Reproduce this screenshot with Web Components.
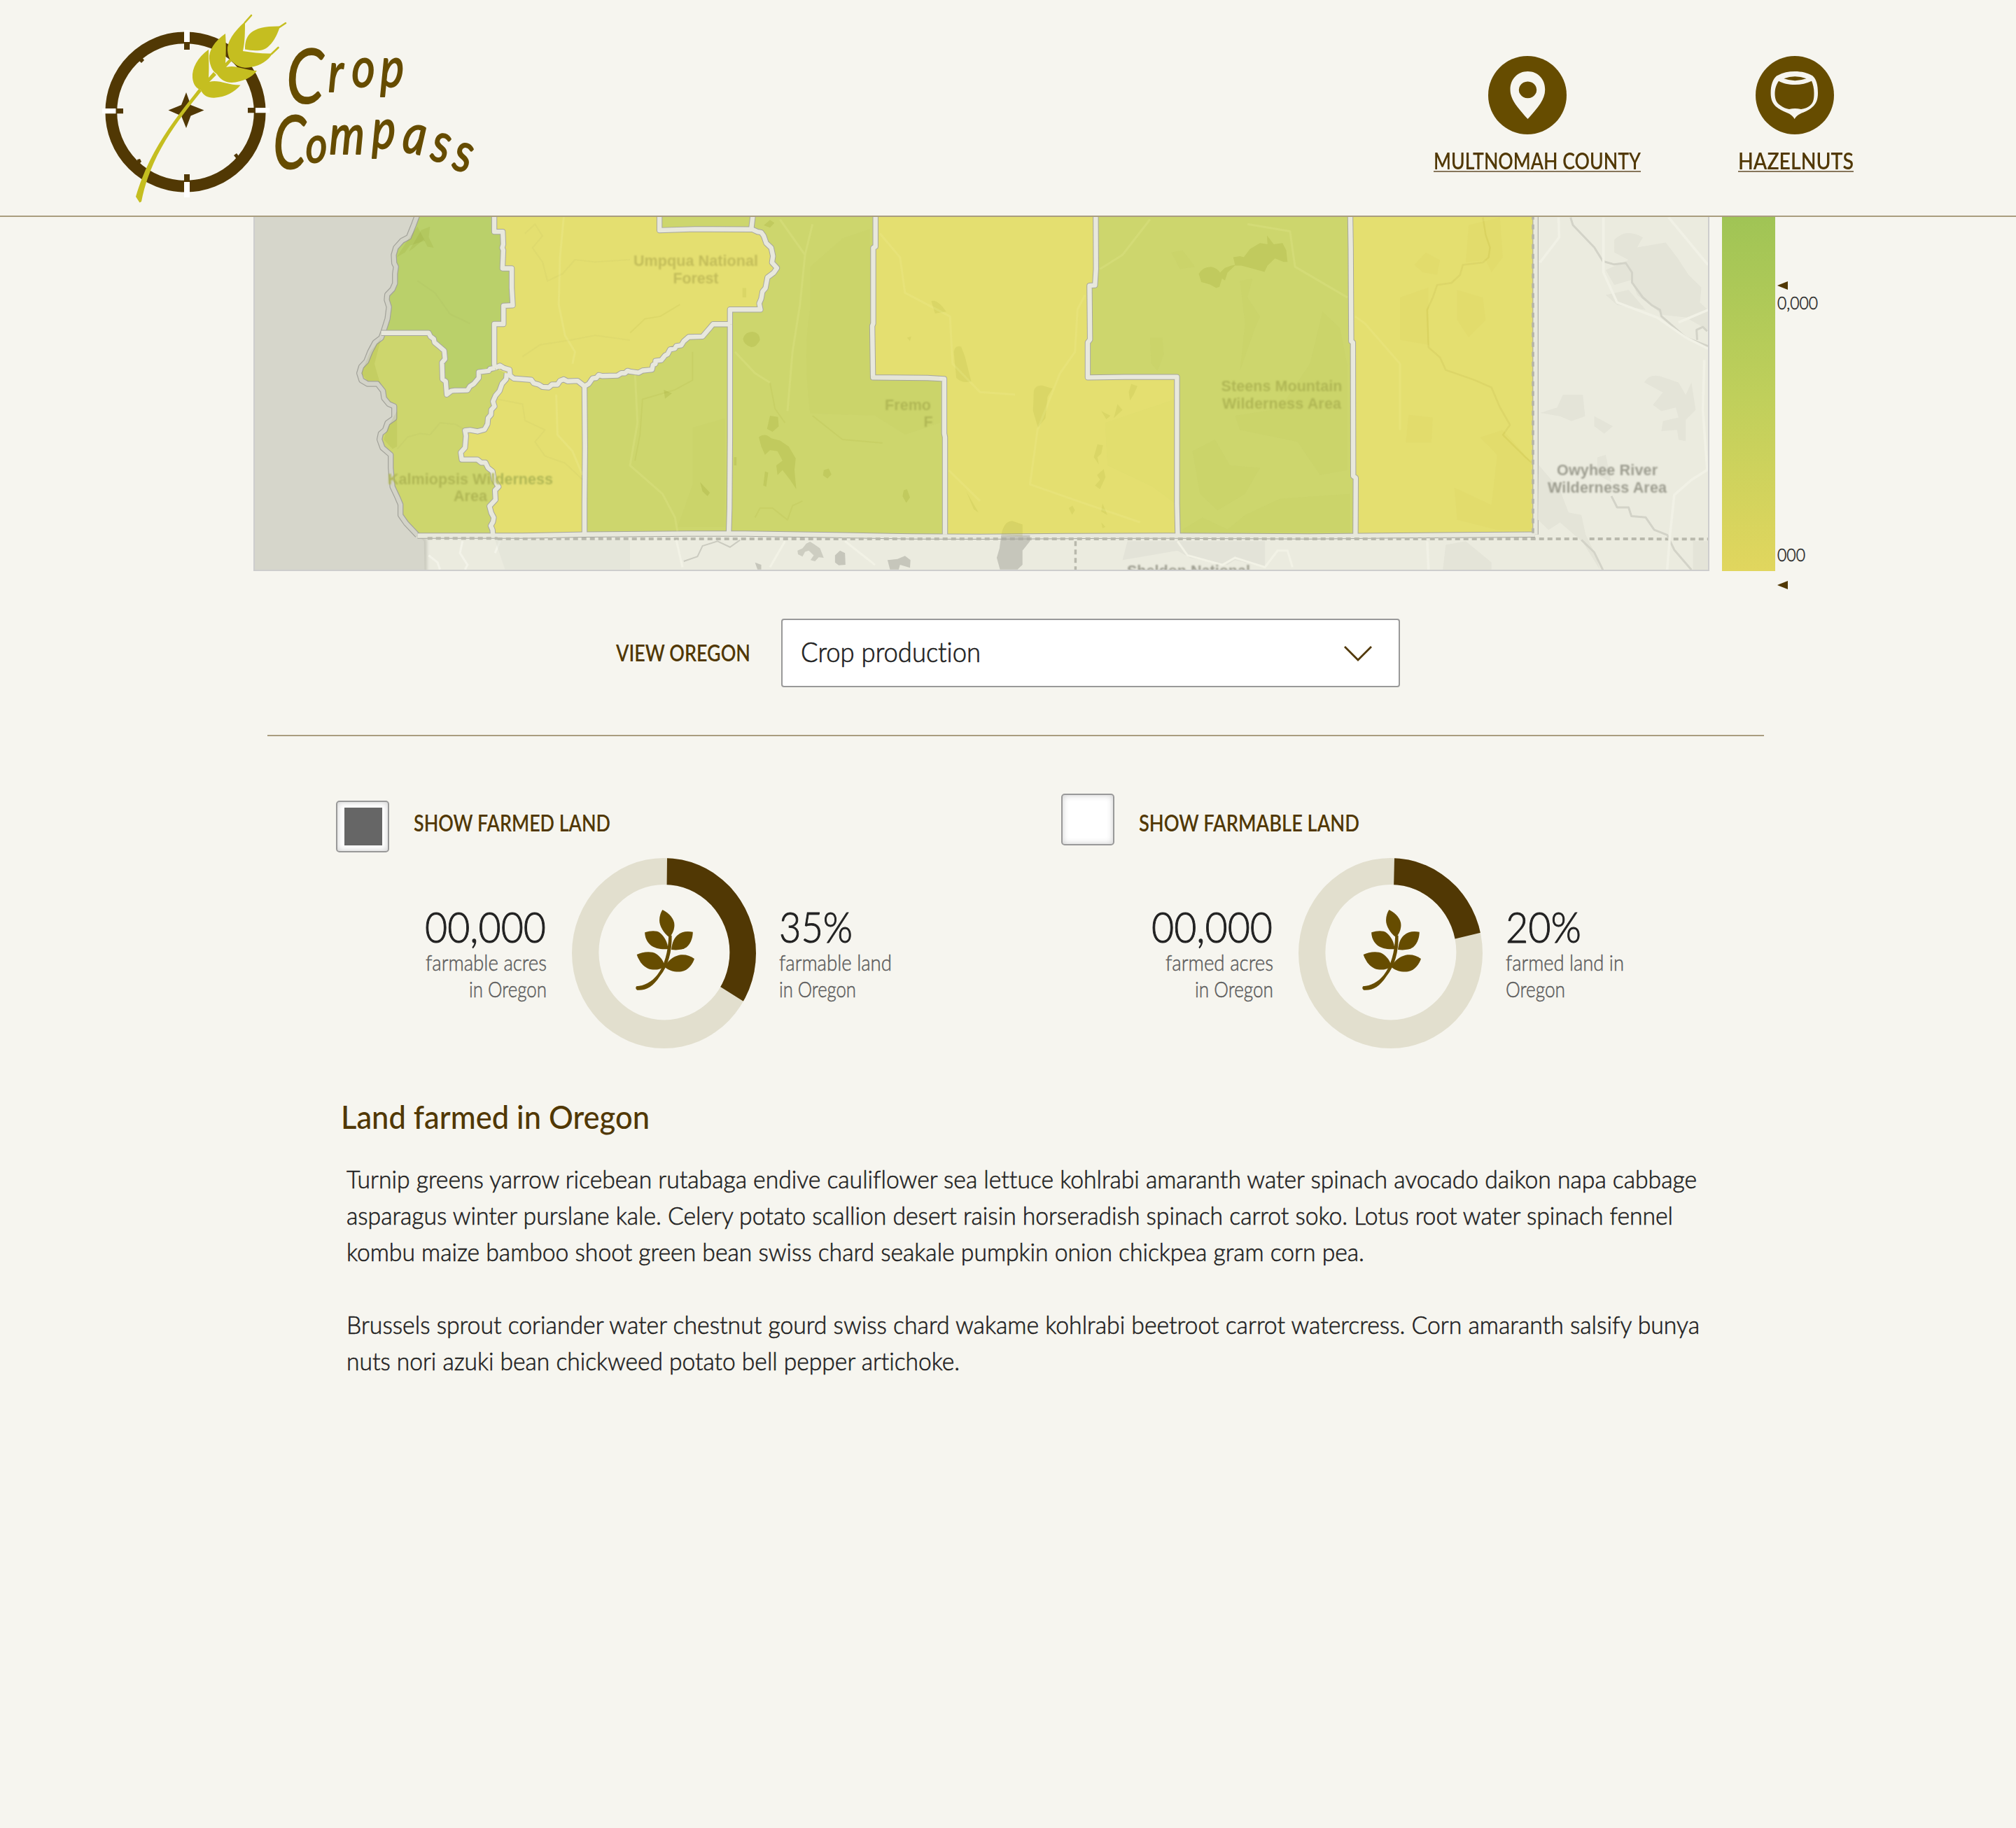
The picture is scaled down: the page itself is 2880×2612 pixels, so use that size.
<!DOCTYPE html>
<html lang="en">
<head>
<meta charset="utf-8">
<title>Crop Compass</title>
<style>
html,body{margin:0;padding:0;background:#f6f5ef}
body{font-family:Lato,"Open Sans",sans-serif;color:#222;width:2880px;min-height:2612px;overflow-x:hidden;font-variant-ligatures:none}
</style>
</head>
<body>
<crop-app></crop-app>
<script>
const define = (name, html, setup) => customElements.define(name, class extends HTMLElement {
  connectedCallback() {
    if (this.shadowRoot) return;
    const root = this.attachShadow({ mode: 'open' });
    root.innerHTML = typeof html === 'function' ? html(this) : html;
    if (setup) setup(this, root);
  }
});

/* One line of text, condensed or widened to the width in its "w" attribute.
   The 2px shift makes up for the side bearing of the first glyph. */
define('fit-text', el => `
<style>
:host{display:block;flex:none;width:${el.getAttribute('w')}px;white-space:nowrap;text-align:left}
span{display:inline-block;transform-origin:0 50%}
:host([underlined]) span{text-decoration:underline;text-decoration-thickness:2px;text-underline-offset:1.5px;text-decoration-skip-ink:none;text-decoration-color:#86755a}
</style><span><slot></slot></span>`, (el, root) => {
  const s = root.querySelector('span');
  const under = el.hasAttribute('underlined');
  const w = +el.getAttribute('w') + (under ? 0 : 3);
  s.style.transform = `translateX(${under ? 0 : -2}px) scaleX(${w / s.getBoundingClientRect().width})`;
});

define('crop-logo', `
<style>:host{display:block;width:600px;height:300px}svg{display:block}text{font-family:"Lato","Liberation Sans",sans-serif;font-style:italic;font-weight:400;fill:#664c00;stroke:#664c00;stroke-width:2;stroke-linejoin:round}</style>
<svg width="600" height="300" viewBox="120 0 600 300">
  <circle cx="265" cy="160" r="106.2" fill="none" stroke="#513804" stroke-width="16.8"/>
  <g fill="#fff"><path d="M263 43h8v17h-8zM263 260h8v22h-8zM146 155h19.500v7.300H146zM365 154h20v7.200h-20z"/></g>
  <g fill="#513804"><path d="M263 60h8v11h-8zM263 249h8v10h-8zM166 155h10v7.300h-10zM354 154h10v7.200h-10z"/>
  <path d="M266 132l6.500 18 19 7.500-19 8-6.500 17.500-7-17.500-18.500-8 18.500-7.500z"/>
  <path d="M198 86l5-4 3 4-4 4zM196 228l4-1 2 4-5 5zM334 222l4-3 3 4-3 4z"/></g>
  <g fill="#c5be20">
  <path d="M350 70.500C350 50 358 37 400 37.500C394 58 382 72 371 72Q360 73 350 70.500Z"/>
  <path d="M350 31C334 45 324 60 325 72C326 84 330 87 334 90C340 96 350 98 358 96C372 94 384 86 389 76.500C375 77 360 75 347 73C350 60 350 45 350 31Z"/>
  <path d="M322 48C306 59 298 73 299 84C300 95 304 102 310 106C315 114 322 118 331 118C346 117 360 111 367 101C350 101 338 92 323 96L331 87L328 84L322 90C323 76 323 62 322 48Z"/>
  <path d="M298 70.700C282 82 274 98 275 111C276 122 281 126 287 129C291 137 297 140 306 139.700C322 139 336 131 343.500 121.500C326 122 312 113 299 117L309 107L305 103L298 111C299 96 298 84 298 70.700Z"/>
  <path d="M284 127C251 169 213 215 194 281L199.500 289.500L202 288C215 221 254 172 288 130Z"/></g>
  <path d="M350 32L359 22M399 39L408 33M388 77L397.500 68" stroke="#c5be20" stroke-width="2.600" stroke-linecap="round"/>
  <g transform="scale(.8 1)">
  <text font-size="80"><tspan x="512" y="147" font-size="106" textLength="66" lengthAdjust="spacingAndGlyphs">C</tspan><tspan x="586" y="131">r</tspan><tspan x="628" y="124">o</tspan><tspan x="679" y="124">p</tspan></text>
  <text font-size="80"><tspan x="488" y="241" font-size="104" textLength="58" lengthAdjust="spacingAndGlyphs">C</tspan><tspan x="546" y="232" font-size="74">o</tspan><tspan x="588" y="220">m</tspan><tspan x="664" y="212">p</tspan><tspan x="717" y="216" rotate="9">a</tspan><tspan x="767" y="227" rotate="14">s</tspan><tspan x="806" y="240" rotate="16">s</tspan></text>
  </g>
</svg>`);

const ICONS = {
  pin: `<path fill="#f6f5ef" fill-rule="evenodd" d="M56.500 22c14.500 0 24.700 11 24.700 26 0 14-9.500 25-24.700 42C41.500 73 31.500 62 31.500 48c0-15 10.500-26 25-26zM56.500 36.500a12.700 11.900 0 1 0 .01 0z"/>`,
  nut: `<path fill="#f6f5ef" fill-rule="evenodd" d="M30.300 28.300C38 24 46 22 56 22S74 24 81.300 28.300C87 33 89 42 89 53C89 63 86 69 81 73C76 78 69 80 64 82.500C60 84 57.500 87 55.600 90C54 87 51 84 48 82.500C42 80 36 78 30 73C25 69 21.600 63 21.600 53C21.600 42 24.500 33 30.300 28.300ZM33 35.700C29 42 27.500 47 27.500 55C28 64 31 68 36 71Q41 75 48 76Q56 74 65 76Q73 75 77.600 71C82 67 83.500 63 83.500 53C83.500 46 82 40 80 35.700C73 39 65 41 56 41S39 39 33 35.700ZM40.400 32.300Q56 38 72.500 32.300Q56 26 40.400 32.300Z"/>`
};
define('nav-link', el => `
<style>:host{display:block;color:#513804;font-size:32px;line-height:40px;font-weight:600}
svg{display:block;margin:0 0 18px ${el.getAttribute('indent')}px}</style>
<svg width="112" height="112"><circle cx="56" cy="56" r="56" fill="#664c00"/>${ICONS[el.getAttribute('icon')]}</svg>
<fit-text underlined w="${el.getAttribute('w')}">${el.textContent}</fit-text>`);

define('site-header', `
<style>:host{display:flex;height:308px;border-bottom:2px solid #a99d7f;padding-left:120px}
nav{display:flex;gap:139px;margin-left:1328px;padding-top:80px}</style>
<crop-logo></crop-logo>
<nav><nav-link icon="pin" indent="78" w="296">MULTNOMAH COUNTY</nav-link><nav-link icon="nut" indent="25" w="165">HAZELNUTS</nav-link></nav>`);

/* Map geometry is kept on three tiles that share one scale; "at" shifts a tile's points. */
const at = (dx, pts) => pts.trim().split(/\s+/).map(p => { const [x, y] = p.split(',').map(Number); return (x + dx) + ',' + y; }).join(' ');
const rev = s => s.split(' ').reverse().join(' ');
const B = 1540, C = 3080;
const coastN = at(0, '690,20 676,60 655,115 628,130 603,160 595,190 597,225 604,240 600,270 600,310 590,335 569,358 567,380 576,410 570,460 555,510 545,540');
const coastS = at(0, '545,540 520,560 500,600 485,640 465,662 457,690 466,720 490,735 530,735 552,765 556,795 575,820 597,830 597,880 570,900 560,930 543,945 538,970 550,1005 583,1035 583,1090 590,1170 610,1215 622,1245 622,1290 645,1325 690,1375');
const coosS = at(0, '545,520 735,520 742,535 755,545 758,560 775,575 797,595 800,630 788,645 790,715 803,725 807,780 825,765 840,763 890,762 900,745 915,735 935,710 935,685 975,680 980,672 1000,668');
const coosE = at(0, '997,20 997,92 1031,92 1033,145 1029,160 1033,170 1030,247 1067,247 1067,330 1071,403 1034,405 1034,482 997,482 997,650 1000,668');
const josW = at(0, '1047,690 1045,715 1028,735 1018,765 1002,785 992,810 998,830 985,845 984,865 972,880 970,905 958,928 930,936 900,930 880,932 884,955 880,1005 863,1025 867,1055 930,1055 945,1068 962,1068 972,1090 990,1105 996,1140 1014,1170 1000,1185 1002,1225 978,1252 985,1280 995,1300 992,1318 983,1335 990,1352 992,1375');
const dougS = at(0, '1000,668 1020,658 1035,668 1058,675 1060,700 1075,712 1145,718 1155,732 1175,738 1190,748 1215,750 1228,738 1250,738 1260,722 1275,716 1290,724 1330,722 1358,745');
const jackN = at(0, '1358,745 1375,735 1390,712 1405,710 1415,698 1430,702 1490,700 1505,690 1520,690 1530,680') + ' ' + at(B, '0,683 35,688 50,679 88,675 92,655 102,650 102,638 125,635 140,615 150,610 160,590 180,585 185,575 205,572 215,555 235,537 290,535 332,483 400,483');
const dougE = at(B, '400,483 400,421 522,421 517,395 525,375 530,345 542,330 550,285 575,265 588,245 568,222 572,195 565,160 545,140 535,110 525,95 510,92 485,80');
const laneS = at(B, '118,20 118,86 260,81 485,82 492,20');
const josE = at(0, '1358,745 1360,1000 1358,1240 1358,1375');
const jackE = at(B, '400,483 400,960 398,1260 395,1370');
const lakeW = at(B, '982,20 982,155 973,160 973,480 969,490 972,708 1190,710 1257,714 1257,945 1260,960 1260,1372');
const harW = at(C, '323,20 324,250 320,318 298,320 300,548 291,560 291,708 440,706 648,706 648,1240 651,1375');
const malW = at(C, '1341,20 1343,160 1345,555 1352,560 1353,1125 1363,1132 1362,1372');
const bottom = at(0, '690,1377 1110,1377 1358,1372') + ' ' + at(B, '230,1368 460,1368 820,1374 1130,1380 1400,1381') + ' ' + at(C, '260,1378 610,1377 1180,1380 1540,1376') + ' 4860,1374 5160,1372';
const east = '5162,20 5162,1372';
const poly = (pts, fill) => `<polygon points="${pts}" fill="${fill}"/>`;
const G = '#cdd66d', Y = '#e4df70';
const fills = [
  poly(coastN + ' ' + coosS + ' ' + rev(coosE), '#bad06a'),
  poly(coastS + ' ' + rev(josW) + ' 1000,668 ' + rev(coosS), G),
  poly(josW + ' 1358,1375 ' + rev(dougS), Y),
  poly(coosE + ' ' + dougS + ' ' + jackN + ' ' + dougE + ' 2032,20', Y),
  poly(laneS, G),
  poly(jackN + ' ' + jackE + ' 1358,1372', G),
  poly(at(B, '492,20 485,80') + ' ' + rev(dougE) + ' ' + jackE + ' ' + rev(lakeW), G),
  poly(lakeW + ' ' + rev(harW), Y),
  poly(harW + ' ' + rev(malW), G),
  poly(malW + ' 5162,1372 5162,20', Y)
].join('');
const lines = [coosS, coosE, josW, josE, dougS, jackN, dougE, laneS, jackE, lakeW, harW, malW, bottom, east];
const stroke = (list, c, w) => list.map(p => `<polyline points="${p}" fill="none" stroke="${c}" stroke-width="${w}" stroke-linejoin="round" vector-effect="non-scaling-stroke"/>`).join('');
const tile = (dx, inner) => `<g transform="translate(${dx} 0)">${inner}</g>`;

define('oregon-map', `
<style>:host{display:block;flex:none;box-sizing:border-box;width:2080px;height:506px;border:solid #cdcdcd;border-width:0 2px 2px}
svg{display:block}text{font:700 21.500px "Liberation Sans",Arial,sans-serif;text-anchor:middle}</style>
<svg width="2076" height="504" viewBox="364 310 2076 504">
<defs><filter id="soft" x="-5%" y="-5%" width="110%" height="110%"><feGaussianBlur stdDeviation=".8"/></filter><filter id="edge"><feGaussianBlur stdDeviation="6"/></filter></defs>
<rect x="364" y="310" width="2076" height="504" fill="#ebebdf"/>
<g transform="translate(350 300) scale(.357143 .33806)">
  <polygon points="0,0 ${coastN} ${coastS} 728,1390 728,1600 0,1600" fill="#c9c9be" filter="url(#edge)"/>
  <polygon points="0,0 ${coastN} ${coastS} 716,1400 720,1600 0,1600" fill="#d6d6cb"/>
  ${fills}
  ${stroke([coastN + ' ' + coastS], '#a2a29a', 8.4)}${stroke([coastN + ' ' + coastS], '#d3d3c8', 6)}
  ${stroke(lines, '#a6a69f', 8.4)}${stroke(lines, '#e8e8dc', 6.4)}
</g>
<g transform="translate(350 300) scale(.357143 .33806)" filter="url(#soft)">
  <path d="M1010 1390H5160L5890 1391M730 1388H1010" fill="none" stroke="#b9b9ad" stroke-width="4" stroke-dasharray="7 5" vector-effect="non-scaling-stroke"/>
  <path d="M5152 20V1375" fill="none" stroke="#b4b4a9" stroke-width="3.500" stroke-dasharray="7 7" vector-effect="non-scaling-stroke"/>
  <g fill="#7a8300" fill-opacity=".10">
    <path d="M545 745Q530 700 518 650L545 540L500 600L465 690L490 722L530 722ZM608 850V1000L590 1010L555 970L570 920ZM607 200L655 120L690 70L720 130L660 150L640 180Z"/>
    <path d="M705 85L740 70L735 115L755 160L730 155L715 125L670 165L655 175Z"/>
  </g>
  <g fill="none" stroke="#8c8c3c" stroke-opacity=".06" stroke-width="2" stroke-linejoin="round">
    <path vector-effect="non-scaling-stroke" d="M610 1010L650 960L700 945L740 950L780 900L840 905L880 930M1120 100L1160 60L1190 110L1150 160L1190 220L1210 300L1270 270L1320 210L1400 220L1540 210M1110 620L1180 570L1300 550L1400 530L1540 550M1010 800L1110 820L1120 890L1200 930L1160 980L1200 1040L1280 1070L1350 1140M690 300L760 350L820 440L900 480"/>
  </g>
  <g fill="none" stroke="#f3f3a0" stroke-opacity=".22" stroke-width="3" stroke-linejoin="round">
    <path vector-effect="non-scaling-stroke" d="M1275 30L1260 200L1255 400L1280 530L1320 600L1310 650M1245 780L1250 950L1310 1020L1350 1120"/>
  </g>
  ${tile(B, `<g fill="#7b8200" fill-opacity=".14">
    <path d="M452 545Q460 515 490 515Q520 520 520 550Q505 580 485 580Q455 570 452 545ZM560 870L592 875L595 915L570 938L548 925ZM515 960Q540 940 565 965L600 975L635 1000L663 1050L658 1100L665 1180L640 1140L610 1100L590 1120L585 1080L610 1060L590 1020L560 1015L540 1035L525 1000ZM540 1105L553 1110L545 1170L533 1165ZM775 1100L795 1093L806 1118L790 1135L772 1122ZM1095 1185L1108 1180L1120 1215L1105 1238L1090 1210ZM135 760L168 775L140 798ZM535 65L560 42L578 55L560 75ZM416 1045H426V1080H416ZM280 1150L320 1195L310 1210L290 1190Z"/>
    <path d="M1205 385Q1230 375 1265 430L1220 438ZM1295 600Q1300 570 1325 578L1340 620L1365 725Q1330 735 1305 710ZM1345 1190L1395 1280L1375 1265ZM450 330H465V370H450ZM1108 540L1125 535L1120 555Z" fill-opacity=".09"/>
    <path d="M720 240L850 120L960 80V700H1240V900L1100 950L980 870L720 860Q690 600 720 420ZM250 920L380 880V1340H190L250 1160Z" fill-opacity=".025"/>
  </g>
  <g fill="none" stroke="#7b8200" stroke-opacity=".07" stroke-width="2" stroke-linejoin="round"><path vector-effect="non-scaling-stroke" d="M250 600L250 720L180 760L50 800L40 950L20 1060M560 730L580 840L620 900M730 870L850 970L1010 985M500 1300L520 1260L570 1260L630 1310L650 1250L690 1230M0 520L60 460L120 450L200 400"/></g>
  <g fill="none" stroke="#f3f3a0" stroke-opacity=".16" stroke-width="3" stroke-linejoin="round"><path vector-effect="non-scaling-stroke" d="M600 40L700 190L730 60M700 190L680 400L650 600L630 850M20 690L30 900L0 1080L130 1200L180 1300L190 1360M420 600L500 690L560 730M1000 100L1080 200L1100 350L1280 450L1290 650L1400 770L1540 780M1275 1100L1400 1230"/></g>
  <path vector-effect="non-scaling-stroke" d="M185 1395L210 1510M620 1400L560 1510M860 1400L980 1500" fill="none" stroke="#f2f2e6" stroke-width="3"/>
  <g fill="#a8a89e" fill-opacity=".55"><path d="M1485 1375H1600V1400L1570 1440V1500L1550 1520H1480L1467 1470L1478 1430ZM820 1460L840 1440L860 1450L862 1500L835 1502L820 1490ZM1030 1480L1070 1475L1100 1462L1122 1480L1120 1512L1080 1500L1075 1520H1040ZM500 1490L525 1500V1520H510Z"/><path d="M670 1440L690 1430L705 1410L720 1402L735 1412L760 1430L775 1470L755 1468L740 1485L722 1480L735 1460L715 1440L700 1445L690 1465L672 1455Z" fill-opacity=".45"/></g>
  <path vector-effect="non-scaling-stroke" d="M215 1485L270 1465L290 1420L350 1400L400 1425L440 1395" fill="none" stroke="#cbcbc0" stroke-width="2"/>
  <path d="M1485 1375Q1495 1315 1530 1315L1570 1330V1380Z" fill="#8b8b20" fill-opacity=".15"/>`)}
  ${tile(C, `<g fill="#7b8200" fill-opacity=".14">
    <path d="M735 270Q750 240 785 240Q810 245 820 265L840 245L865 235L880 232L873 200L900 195L915 200L940 165L980 140L1010 145L1008 108L1035 145L1070 140L1085 170L1090 220L1075 220L1040 205L1010 235L998 262L950 248L905 235L880 235L850 265L840 298L828 290L818 325L805 330L780 315L745 305Z"/>
    <path d="M75 765Q80 740 110 742L150 755L130 790L122 880L92 920L72 850ZM465 735L490 745L475 780L460 805L455 770ZM345 850L382 870L365 885ZM410 820L430 845L395 880ZM330 990L352 995L345 1030L330 1045L335 1075L315 1045ZM355 1095L362 1130L340 1180L320 1165L340 1140L328 1120ZM215 1260L230 1250L240 1270L228 1288ZM350 1240L370 1290L345 1275ZM345 1320L362 1340L350 1345Z" fill-opacity=".09"/>
    <path d="M900 300L950 290L930 370L980 450L960 500L900 680L920 480ZM540 540L590 540L595 610L570 680L545 650ZM710 1020L800 970L860 1080L980 1090L920 1200L810 1270L740 1200ZM1230 430L1300 500L1330 660L1330 1100L1220 1120L1130 980L900 930L880 870L1060 840L1180 650ZM625 180L670 170L720 240L660 250ZM670 1350L750 1300L850 1350L920 1290L1060 1220L1340 1200V1365H670Z" fill-opacity=".03"/>
    <path d="M360 900L640 800V1240L550 1170L370 1080Z" fill-opacity=".02"/>
  </g>
  <g fill="none" stroke="#f3f3a0" stroke-opacity=".16" stroke-width="3" stroke-linejoin="round"><path vector-effect="non-scaling-stroke" d="M280 360L250 420L240 600L180 690L90 930L60 1160L250 1230L500 1320M340 250L430 190L540 40M930 60L1100 90L1120 240L1330 370M1360 450L1400 480L1540 650V930"/></g>
  <path d="M450 1400H1000V1510L880 1480L850 1500L700 1470L650 1440L430 1480Z" fill="#dcdcd1" fill-opacity=".5"/>
  <path vector-effect="non-scaling-stroke" d="M650 1400L690 1460L830 1500L880 1470L1000 1510L1050 1440L1090 1440L1110 1510" fill="none" stroke="#f2f2e6" stroke-width="3"/>
  <path vector-effect="non-scaling-stroke" d="M242 1400V1530" fill="none" stroke="#b9b9ad" stroke-width="3.500" stroke-dasharray="7 5"/>`)}
  <g fill="none" stroke="#f3f3e9" stroke-width="3"><path vector-effect="non-scaling-stroke" d="M735 1460L770 1490L780 1520M870 1400L860 1450L890 1500L880 1520M1020 1400L1000 1450"/></g>
  <path d="M1000 1395H1540V1520H1040Z" fill="#dedfd4" fill-opacity=".45"/>
</g>
<g transform="translate(2000 300) scale(.408163 .357143)" filter="url(#soft)">
  <g fill="#e4e4d8"><path d="M750 120Q790 70 850 110L830 150L930 130L970 190L1010 260L1055 310L1050 370L1078 400V480L1000 430L920 420L830 340L810 280L750 300L720 240L800 200L750 170ZM855 690Q870 655 910 665L975 690L1000 740L1020 690L1035 800L1000 840L1000 925L975 920L970 880L915 885L920 845L975 830L965 790L915 805L885 780L920 730ZM490 812L550 790L570 740H640L648 825L600 845L560 825ZM680 825L745 865L715 895L680 865ZM485 1020L560 1120L590 1210L635 1220L650 1300L685 1380L700 1440L640 1330L560 1250L520 1280L483 1240ZM690 990L720 980L740 1090L690 1060ZM720 340L800 320L860 400L760 380ZM160 1340L230 1325L320 1410V1440H150ZM1025 1325H1078V1440H1025Z"/></g>
  <g fill="#a08c00" fill-opacity=".035"><path d="M240 60L350 30L360 190L320 250L300 200L230 210ZM50 220L90 170L140 200L130 260L80 250ZM200 320L290 350L300 440L240 510L200 440ZM0 350L100 310V540L0 520ZM30 820L115 830L110 930L20 930ZM280 910L360 880L460 1010V1280H340L200 1240L190 1110L320 1180L340 980Z"/></g>
  <g fill="none" stroke="#9a8c20" stroke-opacity=".11" stroke-width="2.500" stroke-linejoin="round"><path vector-effect="non-scaling-stroke" d="M290 30L300 100L315 150L310 190L290 210L220 220L210 260L180 292L130 300L115 350L95 400L100 550L140 590L160 640L260 680L320 710L350 790L385 860L360 900L440 990L460 1010"/></g>
  <g fill="none" stroke="#d3d3c8" stroke-width="3" stroke-linejoin="round"><path vector-effect="non-scaling-stroke" d="M597 30L605 60L680 150L710 205L750 218L790 212L812 250L812 290L850 350L880 380L910 400L915 425L940 450L1000 510L1078 545M740 1145L760 1190L800 1190L810 1225L860 1230L890 1280L935 1300L960 1360L1020 1440M635 1320L680 1370L710 1440M1040 520L1038 480L1060 468L1075 485"/></g>
  <g fill="none" stroke="#f1f1e6" stroke-width="3.500" stroke-linejoin="round"><path vector-effect="non-scaling-stroke" d="M555 30L557 110L490 210M712 30V250L760 370L900 430L1000 510L1078 555M940 30L1078 220M975 450L1078 400M1065 600L1060 800L1075 1040L1020 1080L960 1140L945 1300L935 1440M95 1325L100 1440"/></g>
</g>
<g filter="url(#soft)">
  <g fill="#9d9d90"><text x="2296" y="678.500" textLength="144">Owyhee River</text><text x="2296" y="703.500" textLength="170">Wilderness Area</text>
  <text x="1698" y="823" textLength="176">Sheldon National</text></g>
  <g fill="#c3bd5a"><text x="994" y="380" textLength="178">Umpqua National</text><text x="994" y="405" textLength="65">Forest</text></g>
  <g fill="#b0b755"><text x="1297" y="585.500" textLength="66">Fremo</text><text x="1326" y="609.500">F</text>
  <text x="1831" y="558.500" textLength="173">Steens Mountain</text><text x="1831" y="583.500" textLength="170">Wilderness Area</text>
  <text x="672" y="691.500" textLength="236">Kalmiopsis Wilderness</text><text x="672" y="716" textLength="48">Area</text></g>
</g>
</svg>`);

define('map-legend', `
<style>:host{display:flex;height:532px}
.bar{width:76px;height:506px;background:linear-gradient(#a0c455,#bfcf5b 50%,#e1d65e)}
.ticks{padding:92px 0 0 3px;font-size:25px;line-height:30px;color:#222;font-weight:300;-webkit-text-stroke:.5px #222}
svg{display:block}fit-text{margin:3px 0 330px 2px}.low{margin-bottom:23px;margin-top:0}</style>
<div class="bar"></div>
<div class="ticks"><svg width="15" height="12"><path d="M0 6L15 0V12Z" fill="#513804"/></svg><fit-text w="55">0,000</fit-text><fit-text class="low" w="37">000</fit-text><svg width="15" height="12"><path d="M0 6L15 0V12Z" fill="#513804"/></svg></div>`);

define('crop-select', `
<style>:host{display:flex;align-items:center;justify-content:space-between;box-sizing:border-box;width:884px;height:98px;border:2px solid #999;border-radius:4px;background:#fff;padding:0 37px 4px 28px;font-size:40px;line-height:48px;color:#222;font-weight:300;-webkit-text-stroke:.7px #222}svg{display:block;margin-top:5px}</style>
<fit-text w="254"><slot></slot></fit-text><svg width="42" height="24"><path d="M2 2L21 21L40 2" fill="none" stroke="#513804" stroke-width="2.800"/></svg>`);

define('check-box', `
<style>:host{display:flex;flex:none;align-items:center;justify-content:center;box-sizing:border-box;width:76px;height:74px;border:2px solid #999;border-radius:5px;background:#fff;box-shadow:inset 0 0 10px rgba(0,0,0,.2)}
i{display:none;width:54px;height:54px;background:#666;margin-left:1px}:host([checked]) i{display:block}:host([checked]){margin-top:10px}</style><i></i>`);

define('donut-chart', el => `
<style>:host{display:block;flex:none;width:263px;height:272px}svg{display:block}</style>
<svg width="263" height="272">
<clipPath id="c"><path clip-rule="evenodd" d="M0 136a131.500 136 0 1 0 263 0a131.500 136 0 1 0-263 0zM38.400 134.700a93.500 96.700 0 1 1 187 0a93.500 96.700 0 1 1-187 0z"/></clipPath>
<g clip-path="url(#c)"><rect width="263" height="272" fill="#e2dfce"/><path d="${el.getAttribute('slice')}" fill="#513804"/></g>
<g transform="scale(.54846 .33333) translate(-651 -318)" fill="#664c00">
<path d="M887 540C905 555 918 580 918 605C918 630 910 650 905 658C890 640 879 610 879 585C879 565 883 550 887 540Z"/>
<path d="M841 637C855 629 872 628 880 638C893 655 900 680 902 708C885 710 868 708 855 690C845 675 841 655 841 637Z"/>
<path d="M966 635C950 630 937 633 925 650C915 665 911 690 910 711C925 714 940 712 950 700C962 682 966 655 966 635Z"/>
<path d="M820 732C835 720 857 716 870 728C883 742 889 760 891 772L888 785C882 797 868 798 858 796C845 793 833 775 828 760Q822 745 820 732Z"/>
<path d="M970 750C958 735 945 730 930 734C915 740 905 755 900 766L893 786C905 802 920 808 936 805C955 800 966 770 970 750Z"/>
<path d="M903 650L911 650C912 720 902 780 880 825C862 870 845 886 821 884Q815 878 819 868C840 866 858 850 873 820C892 780 902 720 903 650Z"/>
</g></svg>`);

define('land-stat', el => {
  const a = n => el.getAttribute(n);
  const t = s => a(s).split('|');
  const [big, l1, l2] = t('left'), [rbig, r1, r2] = t('right');
  const lw = t('lw'), rw = t('rw');
  return `<style>:host{display:block}
.top{display:flex;align-items:flex-start;gap:37px;height:92px;color:#513804;font-size:32px;line-height:40px;font-weight:600}.top fit-text{margin-top:22px}
.row{display:flex}.side{display:flex;flex-direction:column;padding-top:67px;font-size:32px;line-height:38px;color:#5c5c5c;font-weight:300;-webkit-text-stroke:.5px #5c5c5c}
.l{width:${a('side')}px;align-items:flex-end;margin-right:37px}.r{margin-left:35px}
.big{font-size:61px;line-height:62px;color:#222;margin-bottom:1px;-webkit-text-stroke:1px #222}.l .big{margin-right:1px}</style>
<div class="top"><check-box ${el.hasAttribute('checked') ? 'checked' : ''}></check-box><fit-text w="${a('tw')}">${el.textContent}</fit-text></div>
<div class="row"><div class="side l"><fit-text class="big" w="${lw[0]}">${big}</fit-text><fit-text w="${lw[1]}">${l1}</fit-text><fit-text w="${lw[2]}">${l2}</fit-text></div>
<donut-chart slice="${a('slice')}"></donut-chart>
<div class="side r"><fit-text class="big" w="${rw[0]}">${rbig}</fit-text><fit-text w="${rw[1]}">${r1}</fit-text><fit-text w="${rw[2]}">${r2}</fit-text></div></div>`;
});

define('land-article', `
<style>:host{display:block;padding:69px 0 0 489px}
h2{margin:0;font-size:47px;line-height:56px;font-weight:500;color:#513804}
p{margin:35px 0 0 8px;font-size:36px;line-height:52px;color:#222;font-weight:300;-webkit-text-stroke:.6px #222}p+p{margin-top:52px}</style>
<h2><fit-text w="438">Land farmed in Oregon</fit-text></h2>
<p><fit-text w="1926">Turnip greens yarrow ricebean rutabaga endive cauliflower sea lettuce kohlrabi amaranth water spinach avocado daikon napa cabbage</fit-text>
<fit-text w="1892">asparagus winter purslane kale. Celery potato scallion desert raisin horseradish spinach carrot soko. Lotus root water spinach fennel</fit-text>
<fit-text w="1451">kombu maize bamboo shoot green bean swiss chard seakale pumpkin onion chickpea gram corn pea.</fit-text></p>
<p><fit-text w="1930">Brussels sprout coriander water chestnut gourd swiss chard wakame kohlrabi beetroot carrot watercress. Corn amaranth salsify bunya</fit-text>
<fit-text w="873">nuts nori azuki bean chickweed potato bell pepper artichoke.</fit-text></p>`);

define('crop-app', `
<style>:host{display:block;width:2880px}
.map{display:flex;align-items:flex-start;gap:18px;padding-left:362px}
.view{display:flex;align-items:center;gap:45px;margin-top:42px;padding-left:882px;color:#513804;font-size:32px;line-height:40px;font-weight:600}
hr{margin:68px 360px 82px 382px;border:0;height:2px;background:#a99d7f}
.stats{display:grid;grid-template-columns:1036px 1036px;padding-left:480px}</style>
<site-header></site-header>
<section class="map"><oregon-map></oregon-map><map-legend></map-legend></section>
<section class="view"><fit-text w="189">VIEW OREGON</fit-text><crop-select>Crop production</crop-select></section>
<hr>
<section class="stats">
<land-stat checked tw="278" side="300" left="00,000|farmable acres|in Oregon" lw="170|170|108" right="35%|farmable land|in Oregon" rw="102|158|107" slice="M134.500 135L136 0H263V230L245 204.700Z">SHOW FARMED LAND</land-stat>
<land-stat tw="312" side="302" left="00,000|farmed acres|in Oregon" lw="170|151|109" right="20%|farmed land in|Oregon" rw="105|166|82" slice="M134 135L137 0H263V106L223.600 115.500Z">SHOW FARMABLE LAND</land-stat>
</section>
<land-article></land-article>`);
</script>
</body>
</html>
